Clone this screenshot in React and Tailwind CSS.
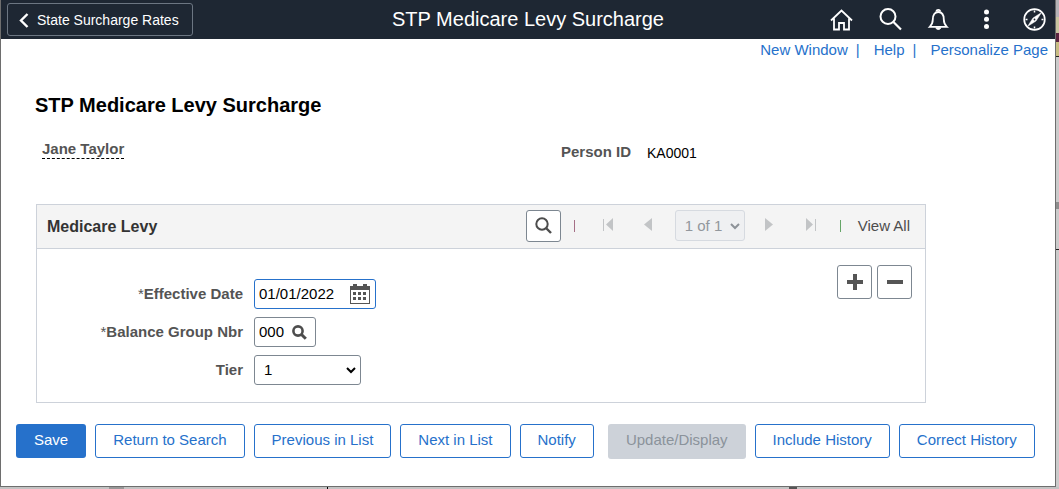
import React from "react";

function HomeIcon() {
  return (
    <svg width="24" height="24" viewBox="0 0 24 24" fill="none" stroke="white" strokeWidth="1.8">
      <path d="M1 12.500 11.500 2.500 22 12.500M4 10.500V21.500h5V15h5v6.500h5V10.500" />
    </svg>
  );
}

function SearchIcon() {
  return (
    <svg width="24" height="24" viewBox="0 0 24 24" fill="none" stroke="white" strokeWidth="2">
      <circle cx="10" cy="8.500" r="7.500" />
      <path d="m15.500 14 7.500 7.500" strokeWidth="2.200" />
    </svg>
  );
}

function BellIcon() {
  return (
    <svg width="24" height="24" viewBox="0 0 24 24" fill="none" stroke="white" strokeWidth="1.800">
      <path d="M3.800 18.800c2-2 3-4 3-7.200 0-5 2-7.600 5.500-7.600s5.500 2.600 5.500 7.600c0 3.200 1 5.200 3 7.200z" />
      <path d="M10.500 3.500c0-2.300 3.600-2.300 3.600 0" />
      <path d="M9.800 19.800c.8 2.300 4.200 2.300 5 0z" fill="white" strokeWidth="1" />
    </svg>
  );
}

function DotsIcon() {
  return (
    <svg width="24" height="24" viewBox="0 0 24 24" fill="white">
      <circle cx="12.500" cy="4" r="2.500" />
      <circle cx="12.500" cy="11.300" r="2.500" />
      <circle cx="12.500" cy="18.600" r="2.500" />
    </svg>
  );
}

function CompassIcon() {
  return (
    <svg width="24" height="24" viewBox="0 0 24 24" fill="none" stroke="white">
      <circle cx="12.500" cy="11.500" r="10.300" strokeWidth="1.700" />
      <path d="M12.500 2.500v2M12.500 18.500v2M3.500 11.500h2M19.500 11.500h2" strokeWidth="1.500" />
      <path d="m19.500 4.500-5.500 8.500-8.500 5.500 5.500-8.500z" fill="white" strokeWidth=".5" />
      <circle cx="12.500" cy="11.500" r=".9" fill="#1e2733" stroke="none" />
    </svg>
  );
}

function CalendarIcon() {
  return (
    <svg width="20" height="20" viewBox="0 0 20 20" fill="#555">
      <path d="M3 0h4v2h6V0h4v2h3v18H0V2h3zM1 6v13h18V6z" fillRule="evenodd" />
      <path d="M3 8h3v3H3zM8 8h3v3H8zM13 8h3v3h-3zM3 13h3v3H3zM8 13h3v3H8zM13 13h3v3h-3z" />
    </svg>
  );
}

function Magnifier({ bold }) {
  return bold ? (
    <svg width="15" height="15" viewBox="0 0 15 15" fill="none" stroke="#4d4d4d">
      <circle cx="6" cy="6" r="4.600" strokeWidth="2.600" />
      <path d="m9.500 9.500 4.300 4.300" strokeWidth="3" />
    </svg>
  ) : (
    <svg width="17" height="17" viewBox="0 0 17 17" fill="none" stroke="#4d4d4d" strokeWidth="2">
      <circle cx="7" cy="7" r="5.700" />
      <path d="m11 11 5 5" strokeWidth="2.400" />
    </svg>
  );
}

function Arrow({ left, bar }) {
  return (
    <svg width="10" height="16" viewBox="0 0 10 16" fill="#c2c4c6">
      {left ? <path d={bar ? "M10 0v13L3 6.500z" : "M9 0v13L1 6.500z"} /> : <path d={bar ? "M0 0v13l7-6.500z" : "M1 0v13l8-6.500z"} />}
      {bar && <path d={left ? "M0 1h1v12H0z" : "M9 1h1v12H9z"} />}
    </svg>
  );
}

function Chevron({ color }) {
  return (
    <svg className="pointer-events-none absolute right-[5px] top-1/2 -translate-y-1/2" width="10" height="8" viewBox="0 0 10 8" fill="none" stroke={color} strokeWidth="2">
      <path d="m1 2 4 4 4-4" />
    </svg>
  );
}

const navActions = [
  ["Home", HomeIcon],
  ["Search", SearchIcon],
  ["Notifications", BellIcon],
  ["Actions", DotsIcon],
  ["Navigator", CompassIcon],
];

const outline =
  "h-[34px] rounded-[3px] border border-[#2671cb] bg-white px-[17px] pb-[3px] text-[#2671cb]";

function FieldLabel({ id, required, children }) {
  return (
    <label htmlFor={id} className="text-right font-bold text-[#545454]">
      {required && <span className="font-normal">*</span>}
      {children}
    </label>
  );
}

function Header() {
  return (
    <header className="grid h-[39px] grid-cols-[1fr_auto_1fr] items-center bg-[#1e2733] text-white">
      <button className="ml-[6px] flex h-[33px] w-[186px] items-center gap-2 rounded-[3px] border border-[#6c7682] pl-[11px] text-sm">
        <svg width="10" height="16" viewBox="0 0 10 16" fill="none" stroke="white" strokeWidth="2.400">
          <path d="M8.500 2 2 8.500l6.500 6.500" />
        </svg>
        State Surcharge Rates
      </button>
      <div className="pb-[2px] text-xl leading-6">STP Medicare Levy Surcharge</div>
      <nav className="flex justify-end gap-6 pr-[9px]">
        {navActions.map(([name, Icon]) => (
          <button key={name} aria-label={name}>
            <Icon />
          </button>
        ))}
      </nav>
    </header>
  );
}

function Pager() {
  return (
    <div className="flex items-center pb-[2px]">
      <button aria-label="Find" className="flex h-8 w-[35px] items-center justify-center rounded-[3px] border border-[#7d8791] bg-white">
        <Magnifier />
      </button>
      <span className="flex w-[27px] justify-center"><i className="h-3 w-px bg-[#a56f86]" /></span>
      <button aria-label="First row" disabled className="flex w-10 justify-center"><Arrow left bar /></button>
      <button aria-label="Previous row" disabled className="flex w-10 justify-center"><Arrow left /></button>
      <div className="relative ml-[7px] mr-1">
        <select aria-label="Row" disabled className="block h-[31px] w-[70px] appearance-none rounded-[3px] border border-[#d6dae0] bg-[#eff0f2] pl-[9px] text-[#92979d] opacity-100">
          <option>1 of 1</option>
        </select>
        <Chevron color="#8d9298" />
      </div>
      <button aria-label="Next row" disabled className="flex w-10 justify-center"><Arrow /></button>
      <button aria-label="Last row" disabled className="flex w-11 justify-center"><Arrow bar /></button>
      <span className="flex w-4 justify-center"><i className="h-3 w-px bg-[#65a567]" /></span>
      <button className="pl-[9px] text-[#4d4d4d]">View All</button>
    </div>
  );
}

function RightEdge() {
  return (
    <div aria-hidden="true" className="flex w-[3px] flex-col">
      <div className="h-[17px] bg-[#b5b3b8]" />
      <div className="h-4 bg-[#c9c5a0]" />
      <div className="h-[9px] bg-[#5c2440]" />
      <div className="h-[14px] bg-[#c8bd83]" />
      <div className="h-px bg-[#222]" />
      <div className="h-[145px] bg-[#cbcbcb]" />
      <div className="h-[7px] bg-[#8e8e8e]" />
      <div className="h-10 bg-[#cbcbcb]" />
      <div className="h-px bg-[#222]" />
      <div className="grow bg-[#cbcbcb]" />
    </div>
  );
}

function BottomEdge() {
  return (
    <div aria-hidden="true" className="flex h-[2px] bg-[#c3c3c3]">
      <div className="w-[109px]" />
      <div className="w-[15px] bg-[#989898]" />
      <div className="w-[203px]" />
      <div className="w-px bg-black" />
      <div className="w-[461px]" />
      <div className="w-2 bg-[#555]" />
    </div>
  );
}

export default function App() {
  return (
    <div className="flex min-h-screen flex-col font-['Liberation_Sans',Arial,sans-serif] text-[15px] leading-[18px]">
      <div className="flex grow">
        <div className="grow border-b border-l border-r border-[#6e6e6e] bg-white">
          <Header />
          <nav className="flex justify-end pr-[7px] pt-[2px] text-[#2671cb]">
            <a href="#new">New Window</a>
            <span className="px-2">|</span>
            <a href="#help" className="pl-[6px]">Help</a>
            <span className="px-2">|</span>
            <a href="#personalize" className="pl-[6px]">Personalize Page</a>
          </nav>
          <main className="px-[15px]">
            <h1 className="pl-[19px] pt-[34px] text-xl font-bold leading-6">STP Medicare Levy Surcharge</h1>
            <div className="flex pl-[26px] pt-[23px]">
              <div className="w-[519px]">
                <span className="inline-block border-b border-dashed border-black font-bold text-[#545454]">Jane Taylor</span>
              </div>
              <dl className="flex gap-4 pt-[3px]">
                <dt className="font-bold text-[#545454]">Person ID</dt>
                <dd className="text-sm leading-5">KA0001</dd>
              </dl>
            </div>
            <section className="ml-5 mt-[41px] max-w-[890px] border border-[#cdd2da]">
              <div className="flex h-11 items-center justify-between border-b border-[#cdd2da] bg-[#f4f4f4] pl-[10px] pr-[15px]">
                <h2 className="text-base font-bold text-[#333]">Medicare Levy</h2>
                <Pager />
              </div>
              <div className="flex justify-between pb-[17px] pr-[13px]">
                <form className="grid auto-rows-[30px] grid-cols-[206px_auto] items-center gap-x-[11px] gap-y-2 pt-[30px]">
                  <FieldLabel id="date" required>Effective Date</FieldLabel>
                  <div className="flex h-[30px] w-[122px] items-center justify-between rounded-[3px] border border-[#2671cb] pl-1 pr-[5px]">
                    <input id="date" defaultValue="01/01/2022" className="w-20 outline-none" />
                    <button type="button" aria-label="Choose a date"><CalendarIcon /></button>
                  </div>
                  <FieldLabel id="group" required>Balance Group Nbr</FieldLabel>
                  <div className="flex h-[30px] w-[62px] items-center justify-between rounded-[3px] border border-[#7d8791] pl-1 pr-2">
                    <input id="group" defaultValue="000" className="w-8 outline-none" />
                    <button type="button" aria-label="Look up group"><Magnifier bold /></button>
                  </div>
                  <FieldLabel id="tier">Tier</FieldLabel>
                  <div className="relative w-[107px]">
                    <select id="tier" className="block h-[30px] w-full appearance-none rounded-[3px] border border-[#7d8791] bg-white pl-[9px]">
                      <option>1</option>
                    </select>
                    <Chevron color="#000" />
                  </div>
                </form>
                <div className="flex gap-[5px] pt-4">
                  <button aria-label="Add row" className="flex h-[34px] w-[35px] items-center justify-center rounded-[3px] border border-[#7d8791]">
                    <svg width="16" height="16" viewBox="0 0 16 16" fill="#555"><path d="M6 0h4v6h6v4h-6v6H6v-6H0V6h6z" /></svg>
                  </button>
                  <button aria-label="Delete row" className="flex h-[34px] w-[35px] items-center justify-center rounded-[3px] border border-[#7d8791]">
                    <svg width="16" height="16" viewBox="0 0 16 16" fill="#555"><path d="M0 6h16v4H0z" /></svg>
                  </button>
                </div>
              </div>
            </section>
            <div className="flex flex-wrap items-start gap-[9px] pb-[26px] pt-[21px]">
              <button className="h-[34px] rounded-[3px] bg-[#2671cb] px-[18px] pb-[3px] text-white">Save</button>
              <button className={outline}>Return to Search</button>
              <button className={outline}>Previous in List</button>
              <button className={outline}>Next in List</button>
              <button className={outline}>Notify</button>
              <button disabled className="ml-[5px] h-[35px] rounded-[3px] bg-[#cdd2d9] px-[18px] pb-[3px] text-[#8b939b]">Update/Display</button>
              <button className={outline}>Include History</button>
              <button className={outline}>Correct History</button>
            </div>
          </main>
        </div>
        <RightEdge />
      </div>
      <BottomEdge />
    </div>
  );
}
